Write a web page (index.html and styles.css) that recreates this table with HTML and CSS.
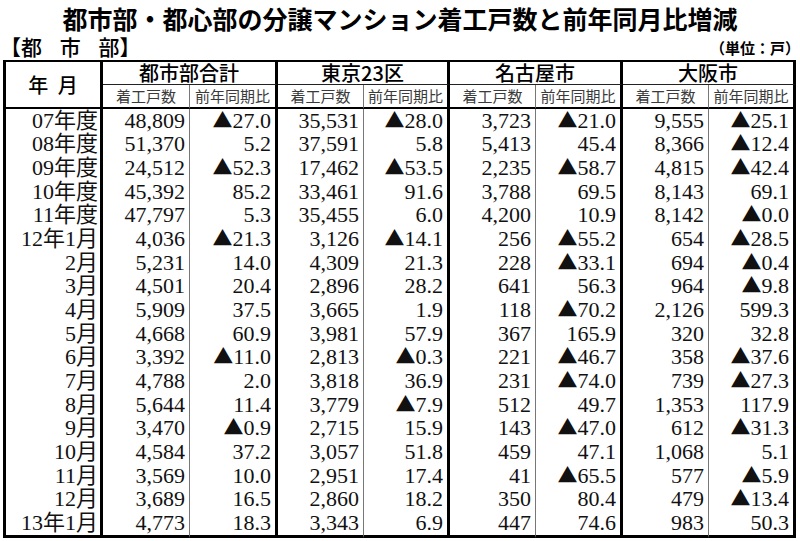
FILE: index.html
```html
<!DOCTYPE html>
<html lang="ja">
<head>
<meta charset="utf-8">
<title>都市部・都心部の分譲マンション着工戸数と前年同月比増減</title>
<link rel="stylesheet" href="styles.css">
</head>
<body>
<h1 class="title">都市部・都心部の分譲マンション着工戸数と前年同月比増減</h1>
<div class="subhead">
  <span class="section">【都 市 部】</span>
  <span class="unit">（単位：戸）</span>
</div>
<table class="stats">
  <colgroup>
    <col class="w100"><col class="w87"><col class="w88"><col class="w86"><col class="w86"><col class="w86"><col class="w87"><col class="w86"><col class="w87">
  </colgroup>
  <thead>
    <tr class="group-row">
      <th rowspan="2" class="ym">年 月</th>
      <th colspan="2" class="group">都市部合計</th>
      <th colspan="2" class="group">東京23区</th>
      <th colspan="2" class="group">名古屋市</th>
      <th colspan="2" class="group">大阪市</th>
    </tr>
    <tr class="sub-row">
      <th class="sub">着工戸数</th><th class="sub end">前年同期比</th>
      <th class="sub">着工戸数</th><th class="sub end">前年同期比</th>
      <th class="sub">着工戸数</th><th class="sub end">前年同期比</th>
      <th class="sub">着工戸数</th><th class="sub end">前年同期比</th>
    </tr>
  </thead>
  <tbody>
    <tr><th class="label">07年度</th><td>48,809</td><td class="end"><span class="tri">▲</span>27.0</td><td>35,531</td><td class="end"><span class="tri">▲</span>28.0</td><td>3,723</td><td class="end"><span class="tri">▲</span>21.0</td><td>9,555</td><td class="end"><span class="tri">▲</span>25.1</td></tr>
    <tr><th class="label">08年度</th><td>51,370</td><td class="end">5.2</td><td>37,591</td><td class="end">5.8</td><td>5,413</td><td class="end">45.4</td><td>8,366</td><td class="end"><span class="tri">▲</span>12.4</td></tr>
    <tr><th class="label">09年度</th><td>24,512</td><td class="end"><span class="tri">▲</span>52.3</td><td>17,462</td><td class="end"><span class="tri">▲</span>53.5</td><td>2,235</td><td class="end"><span class="tri">▲</span>58.7</td><td>4,815</td><td class="end"><span class="tri">▲</span>42.4</td></tr>
    <tr><th class="label">10年度</th><td>45,392</td><td class="end">85.2</td><td>33,461</td><td class="end">91.6</td><td>3,788</td><td class="end">69.5</td><td>8,143</td><td class="end">69.1</td></tr>
    <tr><th class="label">11年度</th><td>47,797</td><td class="end">5.3</td><td>35,455</td><td class="end">6.0</td><td>4,200</td><td class="end">10.9</td><td>8,142</td><td class="end"><span class="tri">▲</span>0.0</td></tr>
    <tr><th class="label">12年1月</th><td>4,036</td><td class="end"><span class="tri">▲</span>21.3</td><td>3,126</td><td class="end"><span class="tri">▲</span>14.1</td><td>256</td><td class="end"><span class="tri">▲</span>55.2</td><td>654</td><td class="end"><span class="tri">▲</span>28.5</td></tr>
    <tr><th class="label">2月</th><td>5,231</td><td class="end">14.0</td><td>4,309</td><td class="end">21.3</td><td>228</td><td class="end"><span class="tri">▲</span>33.1</td><td>694</td><td class="end"><span class="tri">▲</span>0.4</td></tr>
    <tr><th class="label">3月</th><td>4,501</td><td class="end">20.4</td><td>2,896</td><td class="end">28.2</td><td>641</td><td class="end">56.3</td><td>964</td><td class="end"><span class="tri">▲</span>9.8</td></tr>
    <tr><th class="label">4月</th><td>5,909</td><td class="end">37.5</td><td>3,665</td><td class="end">1.9</td><td>118</td><td class="end"><span class="tri">▲</span>70.2</td><td>2,126</td><td class="end">599.3</td></tr>
    <tr><th class="label">5月</th><td>4,668</td><td class="end">60.9</td><td>3,981</td><td class="end">57.9</td><td>367</td><td class="end">165.9</td><td>320</td><td class="end">32.8</td></tr>
    <tr><th class="label">6月</th><td>3,392</td><td class="end"><span class="tri">▲</span>11.0</td><td>2,813</td><td class="end"><span class="tri">▲</span>0.3</td><td>221</td><td class="end"><span class="tri">▲</span>46.7</td><td>358</td><td class="end"><span class="tri">▲</span>37.6</td></tr>
    <tr><th class="label">7月</th><td>4,788</td><td class="end">2.0</td><td>3,818</td><td class="end">36.9</td><td>231</td><td class="end"><span class="tri">▲</span>74.0</td><td>739</td><td class="end"><span class="tri">▲</span>27.3</td></tr>
    <tr><th class="label">8月</th><td>5,644</td><td class="end">11.4</td><td>3,779</td><td class="end"><span class="tri">▲</span>7.9</td><td>512</td><td class="end">49.7</td><td>1,353</td><td class="end">117.9</td></tr>
    <tr><th class="label">9月</th><td>3,470</td><td class="end"><span class="tri">▲</span>0.9</td><td>2,715</td><td class="end">15.9</td><td>143</td><td class="end"><span class="tri">▲</span>47.0</td><td>612</td><td class="end"><span class="tri">▲</span>31.3</td></tr>
    <tr><th class="label">10月</th><td>4,584</td><td class="end">37.2</td><td>3,057</td><td class="end">51.8</td><td>459</td><td class="end">47.1</td><td>1,068</td><td class="end">5.1</td></tr>
    <tr><th class="label">11月</th><td>3,569</td><td class="end">10.0</td><td>2,951</td><td class="end">17.4</td><td>41</td><td class="end"><span class="tri">▲</span>65.5</td><td>577</td><td class="end"><span class="tri">▲</span>5.9</td></tr>
    <tr><th class="label">12月</th><td>3,689</td><td class="end">16.5</td><td>2,860</td><td class="end">18.2</td><td>350</td><td class="end">80.4</td><td>479</td><td class="end"><span class="tri">▲</span>13.4</td></tr>
    <tr class="last"><th class="label">13年1月</th><td>4,773</td><td class="end">18.3</td><td>3,343</td><td class="end">6.9</td><td>447</td><td class="end">74.6</td><td>983</td><td class="end">50.3</td></tr>
  </tbody>
</table>
</body>
</html>
```

FILE: styles.css
```css
html, body {
  margin: 0;
  padding: 0;
  background: #ffffff;
  color: #000000;
}

body {
  width: 800px;
  height: 541px;
  overflow: hidden;
  font-family: "Noto Sans CJK JP", sans-serif;
}

.title {
  margin: 0;
  height: 36px;
  line-height: 36px;
  font-size: 25px;
  font-weight: 700;
  text-align: center;
  white-space: nowrap;
}

.subhead {
  height: 24px;
  display: flex;
  justify-content: space-between;
  align-items: flex-start;
}

.section {
  font-size: 21px;
  line-height: 21px;
  font-weight: 500;
  word-spacing: 13px;
  white-space: pre;
}

.unit {
  align-self: flex-end;
  margin-bottom: 4px;
  font-size: 15px;
  line-height: 16px;
  font-weight: 700;
}

.stats {
  margin-left: 3px;
  width: 793px;
  table-layout: fixed;
  border-collapse: separate;
  border-spacing: 0;
}

.w100 { width: 100px; }
.w88 { width: 88px; }
.w87 { width: 87px; }
.w86 { width: 86px; }

.stats th,
.stats td {
  box-sizing: border-box;
  padding: 0;
  white-space: nowrap;
}

.ym {
  border-left: 3px solid #000;
  border-top: 2px solid #000;
  border-right: 3px solid #000;
  border-bottom: 2px solid #000;
  font-size: 20px;
  font-weight: 500;
  word-spacing: 5px;
  text-align: center;
  vertical-align: middle;
}

.group-row {
  height: 25px;
}

.group {
  border-top: 2px solid #000;
  border-right: 3px solid #000;
  border-bottom: 1px solid #222;
  font-size: 20px;
  line-height: 22px;
  font-weight: 500;
  text-align: center;
  vertical-align: middle;
}

.sub-row {
  height: 24px;
}

.sub {
  border-right: 1px solid #777;
  border-bottom: 2px solid #000;
  font-size: 15px;
  line-height: 20px;
  font-weight: 400;
  color: #3a3a3a;
  text-align: center;
  vertical-align: middle;
}

.sub.end {
  border-right: 3px solid #000;
}

.stats tbody tr {
  height: 23.667px;
}

.stats tbody tr.last {
  height: 26.667px;
}

.label {
  border-left: 3px solid #000;
  border-right: 3px solid #000;
  padding-right: 2px !important;
  font-family: "Liberation Serif", "Noto Sans CJK JP", serif;
  font-size: 22px;
  line-height: 22px;
  font-weight: 400;
  text-align: right;
  vertical-align: middle;
  color: #111;
}

.stats td {
  border-right: 1px solid #777;
  padding-right: 4px;
  font-family: "Liberation Serif", serif;
  font-size: 22px;
  line-height: 22px;
  text-align: right;
  vertical-align: middle;
  color: #111;
}

.stats td.end {
  border-right: 3px solid #000;
}

.tri {
  display: inline-block;
  height: 16px;
  font-family: "Noto Sans CJK JP", sans-serif;
  font-size: 20px;
  line-height: 16px;
  vertical-align: baseline;
}

.stats tr.last th,
.stats tr.last td {
  border-bottom: 3px solid #000;
}
```
